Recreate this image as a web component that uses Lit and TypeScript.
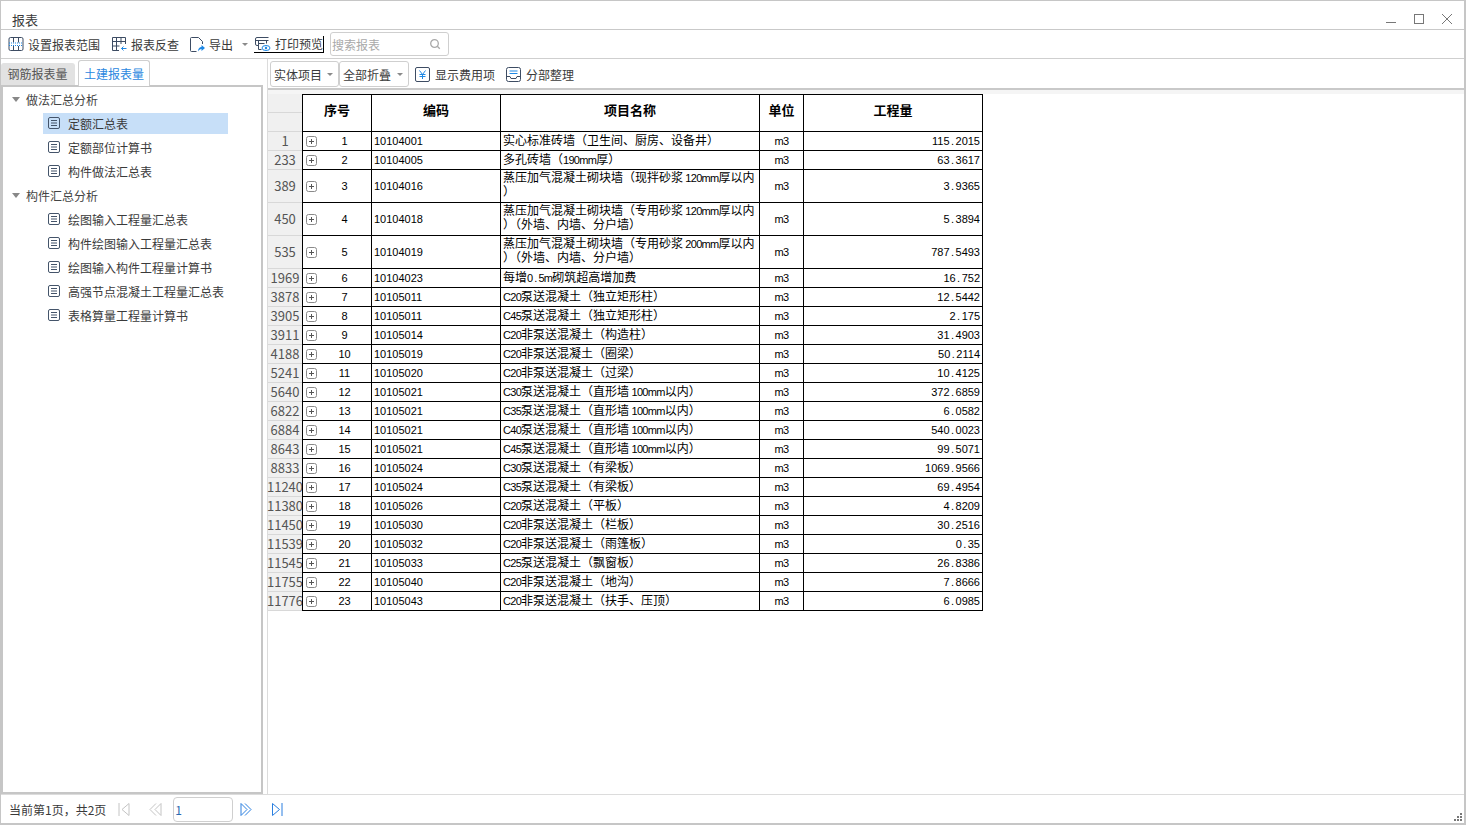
import { LitElement, html, css, svg } from "lit";
import { customElement } from "lit/decorators.js";

type Row = { g: string; n: number; code: string; lines: string[]; q: string };
const W1 = "蒸压加气混凝土砌块墙";
const rows: Row[] = [
  ["1", "10104001", ["实心标准砖墙（卫生间、厨房、设备井）"], "115.2015"],
  ["233", "10104005", ["多孔砖墙（190mm厚）"], "63.3617"],
  ["389", "10104016", [W1 + "（现拌砂浆 120mm厚以内", "）"], "3.9365"],
  ["450", "10104018", [W1 + "（专用砂浆 120mm厚以内", "）（外墙、内墙、分户墙）"], "5.3894"],
  ["535", "10104019", [W1 + "（专用砂浆 200mm厚以内", "）（外墙、内墙、分户墙）"], "787.5493"],
  ["1969", "10104023", ["每增0.5m砌筑超高增加费"], "16.752"],
  ["3878", "10105011", ["C20泵送混凝土（独立矩形柱）"], "12.5442"],
  ["3905", "10105011", ["C45泵送混凝土（独立矩形柱）"], "2.175"],
  ["3911", "10105014", ["C20非泵送混凝土（构造柱）"], "31.4903"],
  ["4188", "10105019", ["C20非泵送混凝土（圈梁）"], "50.2114"],
  ["5241", "10105020", ["C20非泵送混凝土（过梁）"], "10.4125"],
  ["5640", "10105021", ["C30泵送混凝土（直形墙 100mm以内）"], "372.6859"],
  ["6822", "10105021", ["C35泵送混凝土（直形墙 100mm以内）"], "6.0582"],
  ["6884", "10105021", ["C40泵送混凝土（直形墙 100mm以内）"], "540.0023"],
  ["8643", "10105021", ["C45泵送混凝土（直形墙 100mm以内）"], "99.5071"],
  ["8833", "10105024", ["C30泵送混凝土（有梁板）"], "1069.9566"],
  ["11240", "10105024", ["C35泵送混凝土（有梁板）"], "69.4954"],
  ["11380", "10105026", ["C20泵送混凝土（平板）"], "4.8209"],
  ["11450", "10105030", ["C20非泵送混凝土（栏板）"], "30.2516"],
  ["11539", "10105032", ["C20非泵送混凝土（雨篷板）"], "0.35"],
  ["11545", "10105033", ["C25泵送混凝土（飘窗板）"], "26.8386"],
  ["11755", "10105040", ["C20非泵送混凝土（地沟）"], "7.8666"],
  ["11776", "10105043", ["C20非泵送混凝土（扶手、压顶）"], "6.0985"],
].map((r: any, i) => ({ g: r[0], n: i + 1, code: r[1], lines: r[2], q: r[3] }));

const tree = [
  { t: "做法汇总分析", c: ["定额汇总表", "定额部位计算书", "构件做法汇总表"] },
  { t: "构件汇总分析", c: ["绘图输入工程量汇总表", "构件绘图输入工程量汇总表", "绘图输入构件工程量计算书", "高强节点混凝土工程量汇总表", "表格算量工程量计算书"] },
];

// The decimal point takes a full half-width cell in the sheet's font
const num = (s: string) => {
  const [a, b] = s.split(".");
  return b === undefined ? a : html`${a}<span class="dot">.</span>${b}`;
};

// Latin runs in the sheet are half the width of the CJK cells; runs with letters need tightening
const mix = (s: string) =>
  s.split(/([\x20-\x7e]+)/).filter(Boolean).map((p) =>
    /^[\x20-\x7e]+$/.test(p)
      ? html`<span class="l ${/[a-zA-Z]/.test(p) ? "t" : ""}">${num(p)}</span>`
      : p);

const I = (w: number, h: number, body: unknown) =>
  html`<svg class="ic" width=${w} height=${h} viewBox="0 0 ${w} ${h}" fill="none">${body}</svg>`;

const docIcon = (c: string) => I(13, 13, svg`<rect x=".5" y=".5" width="11" height="11" rx="1.500" stroke=${c}/><path d="M3 3.500h6M3 6h6M3 8.500h6" stroke=${c}/>`);
const rangeIcon = I(16, 16, svg`<rect x="1" y="1.500" width="14" height="13" rx="1.500" stroke="#3d4c63"/><path d="M5.500 1.500v5M10.500 1.500v5M5.500 10v4.500M10.500 10v4.500" stroke="#3d4c63"/><path d="M1 7h14M1 9.500h14" stroke="#1e88e5" stroke-dasharray="1 1"/>`);
const checkIcon = I(16, 16, svg`<path d="M8 14.500H1.500V1.500h13V8M1.500 5.500h13M1.500 10h7M5.500 1.500v13M10 1.500V8" stroke="#3d4c63"/><path d="M15.500 12.500H10.500M12.500 10.500l-2 2 2 2" stroke="#1e88e5"/>`);
const exportIcon = I(16, 17, svg`<path d="M9.500 1.500H2.500a1 1 0 0 0-1 1v12a1 1 0 0 0 1 1h5M9.500 1.500l4 4v2.500" stroke="#3d4c63"/><path d="M9 15.500c0-3 1.500-4.500 3.500-4.500V9l3.500 3-3.500 3v-2c-1.500 0-2.500 1-3.500 2.500z" fill="#1e88e5"/>`);
const printIcon = I(17, 16, svg`<path d="M4.500 9.500H3a1.500 1.500 0 0 1-1.500-1.500V3A1.500 1.500 0 0 1 3 1.500h11.500M1.500 4.500h13M4.500 4.500v9h3M12.500 4.500v3M4.500 7.500h6" stroke="#3d4c63"/><ellipse cx="12" cy="12" rx="4" ry="2.500" stroke="#1e88e5"/><circle cx="12" cy="12" r="1.200" fill="#1e88e5"/>`);
const search = I(12, 12, svg`<circle cx="5.500" cy="5.500" r="3.800" stroke="#a9a9a9" stroke-width="1.300"/><path d="M8.300 8.300l2.500 2.500" stroke="#a9a9a9" stroke-width="1.300"/>`);
const yen = I(15, 15, svg`<rect x=".5" y=".5" width="14" height="14" rx="1.500" stroke="#3d4c63"/><path d="M4.500 3.500l3 4 3-4M7.500 7.500v4.500M4.500 7.500h6M4.500 9.500h6" stroke="#1e88e5"/>`);
const arrange = I(15, 15, svg`<rect x=".5" y=".5" width="14" height="14" rx="2" stroke="#3d4c63"/><path d="M3.500 4h8M3.500 6.500h8" stroke="#1e88e5"/><path d="M.5 9.500h3.500l1 2h5l1-2h3.500" stroke="#3d4c63"/>`);
const plus = I(11, 11, svg`<rect x=".5" y=".5" width="10" height="10" rx="2" stroke="#8a8a8a"/><path d="M3 5.500h5M5.500 3v5" stroke="#555"/>`);

@customElement("app-root")
export class AppRoot extends LitElement {
  static styles = css`
    :host { display: flex; flex-direction: column; width: 1466px; height: 825px; box-sizing: border-box;
      border: 1px solid #c6c6c6; border-right-width: 2px; border-bottom-width: 2px; background: #fff;
      font: 12px "Noto Sans CJK SC", "Liberation Sans", sans-serif; color: #3a3a3a; overflow: hidden; }
    .ic { display: block; flex: none; }
    .title { height: 28px; flex: none; display: flex; align-items: flex-end; padding: 0 11px; border-bottom: 1px solid #c9c9c9; }
    .title .name { font-size: 13px; line-height: 20px; margin-bottom: -1px; flex: 1; }
    .wc { display: flex; gap: 16px; align-items: center; height: 26px; box-sizing: border-box; padding-top: 6px; }
    .toolbar { height: 28px; flex: none; display: flex; align-items: center; padding-left: 7px; border-bottom: 1px solid #cfcfcf; }
    .tb { display: flex; align-items: center; gap: 4px; white-space: nowrap; }
    .tb.a { margin-left: 11px; }
    .tb.b { margin-left: 10px; }
    .tb.c { margin-left: 6px; }
    .gap { margin-left: 5px; }
    .caret { width: 0; height: 0; border: 3px solid transparent; border-top: 3px solid #8a8a8a; border-bottom: 0; flex: none; }
    .search { width: 119px; height: 24px; box-sizing: border-box; border: 1px solid #cfcfcf; border-radius: 3px; display: flex; align-items: center; justify-content: space-between; padding: 0 7px 0 1px; color: #a9a9a9; margin-left: 6px; }
    .main { flex: 1; min-height: 0; display: flex; }
    .left { width: 262px; flex: none; display: flex; flex-direction: column; }
    .tabs { height: 26px; flex: none; display: flex; align-items: flex-end; }
    .tab { height: 22px; width: 74px; box-sizing: border-box; background: #e2e2e2; border-radius: 3px 3px 0 0; text-align: center; line-height: 21px; color: #555; margin-right: 3px; padding-right: 1px; }
    .tab.on { height: 26px; width: 72px; background: #fff; color: #2a87e0; border: 1px solid #cfcfcf; border-bottom: 0; line-height: 26px; position: relative; z-index: 1; margin-bottom: -1px; padding-right: 0; }
    .panel { flex: 1; border: 2px solid #c6c6c6; }
    .g, .it { height: 24px; display: flex; align-items: center; }
    .g { padding-left: 9px; gap: 6px; color: #444; }
    .tri { width: 0; height: 0; border: 4px solid transparent; border-top: 5px solid #888; border-bottom: 0; }
    .it { padding-left: 40px; }
    .box { width: 185px; height: 21px; display: flex; align-items: center; padding-left: 5px; gap: 7px; white-space: nowrap; box-sizing: border-box; }
    .box.sel { background: #c7dff8; }
    .right { flex: 1; min-width: 0; margin-left: 4px; display: flex; flex-direction: column; border-left: 1px solid #dcdcdc; }
    .rbar { height: 31px; flex: none; display: flex; align-items: center; padding: 1px 0 0 1px; box-sizing: border-box; border-bottom: 2px solid #c9c9c9; }
    .dd { height: 26px; box-sizing: border-box; width: 70px; border: 1px solid #cfcfcf; border-radius: 3px; display: flex; align-items: center; justify-content: space-between; padding: 0 5px 0 3px; }
    .dd.first { width: 69px; margin-left: 1px; }
    .rtool { display: flex; align-items: center; gap: 5px; white-space: nowrap; margin-left: 6px; }
    .rtool + .rtool { margin-left: 11px; }
    .sheet { flex: 1; min-height: 0; background: linear-gradient(#f5f5f5 4px, #fff 4px); padding-top: 4px; display: flex; align-items: flex-start; }
    .gut { width: 34px; flex: none; background: #f0f0f0; color: #555; font-size: 13px; }
    .gut div { box-sizing: border-box; border-bottom: 1px solid #d8d8d8; display: flex; align-items: center; justify-content: center; white-space: nowrap; padding-bottom: 1px; }
    .grid { display: grid; grid-template-columns: 69px 129px 259px 44px 179px; border-top: 1px solid #000; border-left: 1px solid #000; color: #000; }
    .c { box-sizing: border-box; border-right: 1px solid #000; border-bottom: 1px solid #000; display: flex; align-items: center; line-height: 14px; white-space: nowrap; }
    .h { font-weight: 700; font-size: 13px; justify-content: center; height: 37px; padding-bottom: 6px; }
    .code { padding-left: 2px; }
    .nm { padding-left: 2px; display: block; }
    .nm.one { padding-top: 1px; }
    .nm div { height: 14px; }
    .u { justify-content: center; }
    .q { justify-content: flex-end; padding-right: 2px; }
    .n { padding-left: 3px; }
    .v { flex: 1; text-align: center; padding-left: 1px; }
    .l { font-family: "Liberation Sans", "DejaVu Sans", sans-serif; font-size: 11px; line-height: 14px; }
    .t { letter-spacing: -0.7px; }
    .dot { display: inline-block; width: 6px; text-align: center; }
    .status { height: 28px; flex: none; display: flex; align-items: center; border-top: 1px solid #dcdcdc; padding-left: 8px; position: relative; }
    .pg { display: flex; align-items: center; margin-left: 12px; }
    .pi { width: 60px; height: 25px; box-sizing: border-box; border: 1px solid #cfcfcf; border-radius: 4px; color: #2a6ab0; padding: 0 1px; line-height: 23px; margin: 0 7px 0 11px; }
    .spacer { width: 18px; }
    .grip { position: absolute; right: 1px; bottom: 1px; }
  `;

  render() {
    return html`
      <div class="title">
        <div class="name">报表</div>
        <div class="wc">
          ${I(12, 12, svg`<path d="M1 9.500h10" stroke="#777"/>`)}
          ${I(12, 12, svg`<rect x="1.500" y="1.500" width="9" height="9" stroke="#777"/>`)}
          ${I(12, 12, svg`<path d="M1 1l10 10M11 1L1 11" stroke="#777"/>`)}
        </div>
      </div>
      <div class="toolbar">
        <div class="tb">${rangeIcon}<span>设置报表范围</span></div>
        <div class="tb a">${checkIcon}<span>报表反查</span></div>
        <div class="tb b">${exportIcon}<span>导出</span><span class="caret gap"></span></div>
        <div class="tb c">${printIcon}<span>打印预览</span></div>
        <div class="search"><span>搜索报表</span>${search}</div>
      </div>
      <div class="main">
        <div class="left">
          <div class="tabs">
            <div class="tab">钢筋报表量</div>
            <div class="tab on">土建报表量</div>
          </div>
          <div class="panel">
            ${tree.map((g) => html`
              <div class="g"><span class="tri"></span><span>${g.t}</span></div>
              ${g.c.map((t) => html`<div class="it"><div class="box ${t === "定额汇总表" ? "sel" : ""}">${docIcon("#44546a")}<span>${t}</span></div></div>`)}
            `)}
          </div>
        </div>
        <div class="right">
          <div class="rbar">
            <div class="dd first"><span>实体项目</span><span class="caret"></span></div>
            <div class="dd"><span>全部折叠</span><span class="caret"></span></div>
            <div class="rtool">${yen}<span>显示费用项</span></div>
            <div class="rtool">${arrange}<span>分部整理</span></div>
          </div>
          <div class="sheet">
            <div class="gut">
              <div style="height:19px"></div>
              <div style="height:19px"></div>
              ${rows.map((r) => html`<div style="height:${r.lines.length > 1 ? 33 : 19}px">${r.g}</div>`)}
            </div>
            <div class="grid">
              <div class="c h">序号</div><div class="c h">编码</div><div class="c h">项目名称</div><div class="c h">单位</div><div class="c h">工程量</div>
              ${rows.map((r) => {
                const multi = r.lines.length > 1;
                const st = `height:${multi ? 33 : 19}px`;
                return html`
                  <div class="c n" style=${st}>${plus}<span class="v l">${r.n}</span></div>
                  <div class="c code l" style=${st}>${r.code}</div>
                  <div class="c nm ${multi ? "" : "one"}" style=${st}>${r.lines.map((l) => html`<div>${mix(l)}</div>`)}</div>
                  <div class="c u l t" style=${st}>m3</div>
                  <div class="c q l" style=${st}><span>${num(r.q)}</span></div>`;
              })}
            </div>
          </div>
        </div>
      </div>
      <div class="status">
        <span>当前第1页，共2页</span>
        <div class="pg">
          ${I(13, 15, svg`<path d="M1 1v13" stroke="#c4c4c4"/><path d="M11 1.500L4 7.500l7 6z" stroke="#c4c4c4"/>`)}
          <span class="spacer"></span>
          ${I(13, 15, svg`<path d="M7 1.500L1 7.500l6 6M12 1.500l-6 6 6 6z" stroke="#c4c4c4"/>`)}
          <div class="pi">1</div>
          ${I(13, 15, svg`<path d="M1 1.500l6 6-6 6zM5 1.500l6 6-6 6" stroke="#2a7fe0"/>`)}
          <span class="spacer"></span>
          ${I(13, 15, svg`<path d="M11 1v13" stroke="#2a7fe0"/><path d="M1.500 1.500l7 6-7 6z" stroke="#2a7fe0"/>`)}
        </div>
        <svg class="grip" width="9" height="9" viewBox="0 0 9 9" fill="#777"><path d="M6 0h2v2H6zM3 3h2v2H3zM6 3h2v2H6zM0 6h2v2H0zM3 6h2v2H3zM6 6h2v2H6z"/></svg>
      </div>
    `;
  }
}
